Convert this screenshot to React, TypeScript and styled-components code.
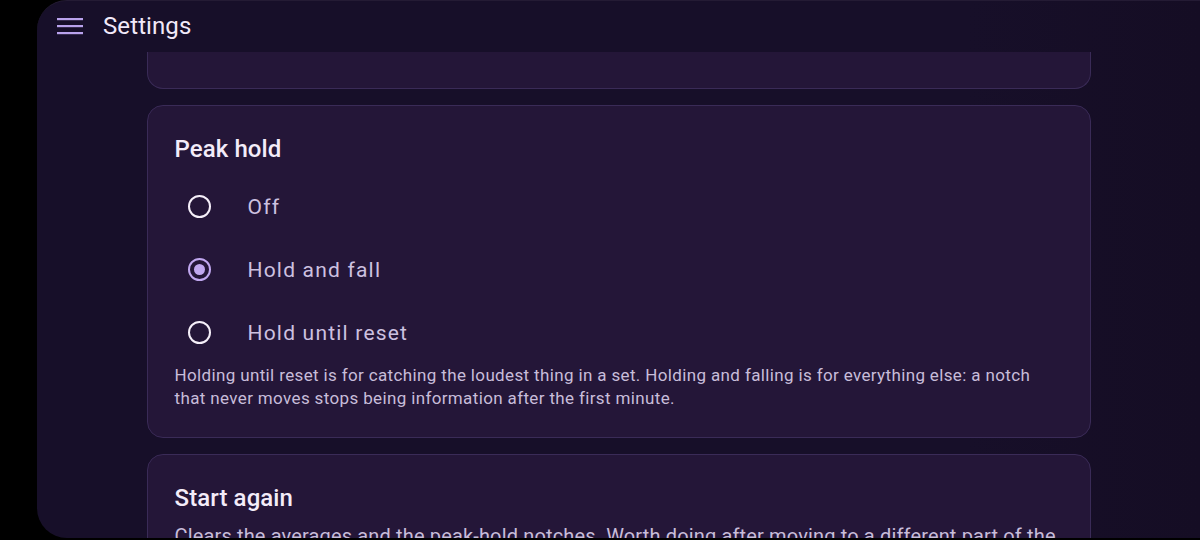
import React from "react"
import styled, { createGlobalStyle } from "styled-components"

const GlobalStyle = createGlobalStyle`
    html, body {
        margin: 0;
        padding: 0;
        background: #000000;
        font-family: Roboto, "Noto Sans", sans-serif;
    }
`

const Screen = styled.div`
    display: flex;
    width: 1200px;
    height: 540px;
    background: #000000;
    overflow: hidden;
`

const AppWindow = styled.div`
    display: flex;
    flex-direction: column;
    margin-left: 37px;
    flex: 1;
    height: 538px;
    border-top: 1px solid #241b34;
    border-radius: 30px 0 0 30px;
    background: linear-gradient(90deg, #170f29 0%, #170f29 80%, #150d24 100%);
    overflow: hidden;
    box-sizing: border-box;
`

const TopBar = styled.div`
    display: flex;
    align-items: center;
    gap: 20px;
    height: 51px;
    flex-shrink: 0;
    padding-left: 20px;
    padding-bottom: 2px;
    box-sizing: border-box;
`

const MenuButton = styled.div`
    display: flex;
    align-items: center;
    justify-content: center;
    width: 26px;
    height: 24px;
`

const BarTitle = styled.div`
    font-size: 24px;
    color: #f1e9f8;
    font-weight: 400;
    letter-spacing: 0.1px;
`

const Content = styled.div`
    display: flex;
    flex-direction: column;
    align-items: center;
    gap: 16px;
    flex: 1;
    overflow: hidden;
`

const Card = styled.div<{ $clipped?: boolean }>`
    width: 944px;
    box-sizing: border-box;
    background: #241638;
    border: 1px solid #3a2b57;
    border-radius: ${p => (p.$clipped ? "0 0 16px 16px" : "16px")};
    border-top: ${p => (p.$clipped ? "none" : "1px solid #3a2b57")};
    padding: ${p => (p.$clipped ? "0" : "28px 27px 27px")};
    height: ${p => (p.$clipped ? "37px" : "auto")};
    flex-shrink: 0;
`

const CardTitle = styled.div`
    font-size: 24px;
    line-height: 30px;
    font-weight: 500;
    color: #f3ecf9;
    letter-spacing: 0.1px;
`

const RadioList = styled.div`
    display: flex;
    flex-direction: column;
    margin-top: 11px;
`

const RadioRow = styled.label`
    display: flex;
    align-items: center;
    gap: 24px;
    height: 63px;
    padding-left: 1px;
`

const RadioBox = styled.div`
    display: flex;
    align-items: center;
    justify-content: center;
    width: 48px;
    height: 48px;
`

const RadioRing = styled.div<{ $on?: boolean }>`
    display: flex;
    align-items: center;
    justify-content: center;
    width: 23px;
    height: 23px;
    box-sizing: border-box;
    border-radius: 50%;
    border: 2.5px solid ${p => (p.$on ? "#c0a7ef" : "#f5eff9")};
`

const RadioDot = styled.div`
    width: 11px;
    height: 11px;
    border-radius: 50%;
    background: #c0a7ef;
`

const RadioLabel = styled.span`
    font-size: 21px;
    color: #cdc1e0;
    letter-spacing: 1.2px;
`

const Description = styled.p<{ $large?: boolean }>`
    margin: ${p => (p.$large ? "9px" : "0")} 0 0;
    font-size: ${p => (p.$large ? "20px" : "17px")};
    line-height: ${p => (p.$large ? "28px" : "23px")};
    color: #c8bdda;
    letter-spacing: ${p => (p.$large ? "0.15px" : "0.36px")};
`

const MenuIcon = () => (
    <svg width="26" height="18" viewBox="0 0 26 18">
        <rect x="0" y="1" width="26" height="2.2" fill="#b9a2ec" />
        <rect x="0" y="8" width="26" height="2.2" fill="#b9a2ec" />
        <rect x="0" y="15" width="26" height="2.2" fill="#b9a2ec" />
    </svg>
)

const options = ["Off", "Hold and fall", "Hold until reset"]

export default function App() {
    const selected = "Hold and fall"

    return (
        <>
            <GlobalStyle />
            <Screen>
                <AppWindow>
                    <TopBar>
                        <MenuButton>
                            <MenuIcon />
                        </MenuButton>
                        <BarTitle>Settings</BarTitle>
                    </TopBar>

                    <Content>
                        <Card $clipped />

                        <Card>
                            <CardTitle>Peak hold</CardTitle>
                            <RadioList>
                                {options.map(option => (
                                    <RadioRow key={option}>
                                        <RadioBox>
                                            <RadioRing $on={option === selected}>
                                                {option === selected && <RadioDot />}
                                            </RadioRing>
                                        </RadioBox>
                                        <RadioLabel>{option}</RadioLabel>
                                    </RadioRow>
                                ))}
                            </RadioList>
                            <Description>
                                Holding until reset is for catching the loudest thing in a set. Holding and falling is for
                                everything else: a notch that never moves stops being information after the first minute.
                            </Description>
                        </Card>

                        <Card>
                            <CardTitle>Start again</CardTitle>
                            <Description $large>
                                Clears the averages and the peak-hold notches. Worth doing after moving to a different part of
                                the room.
                            </Description>
                        </Card>
                    </Content>
                </AppWindow>
            </Screen>
        </>
    )
}
